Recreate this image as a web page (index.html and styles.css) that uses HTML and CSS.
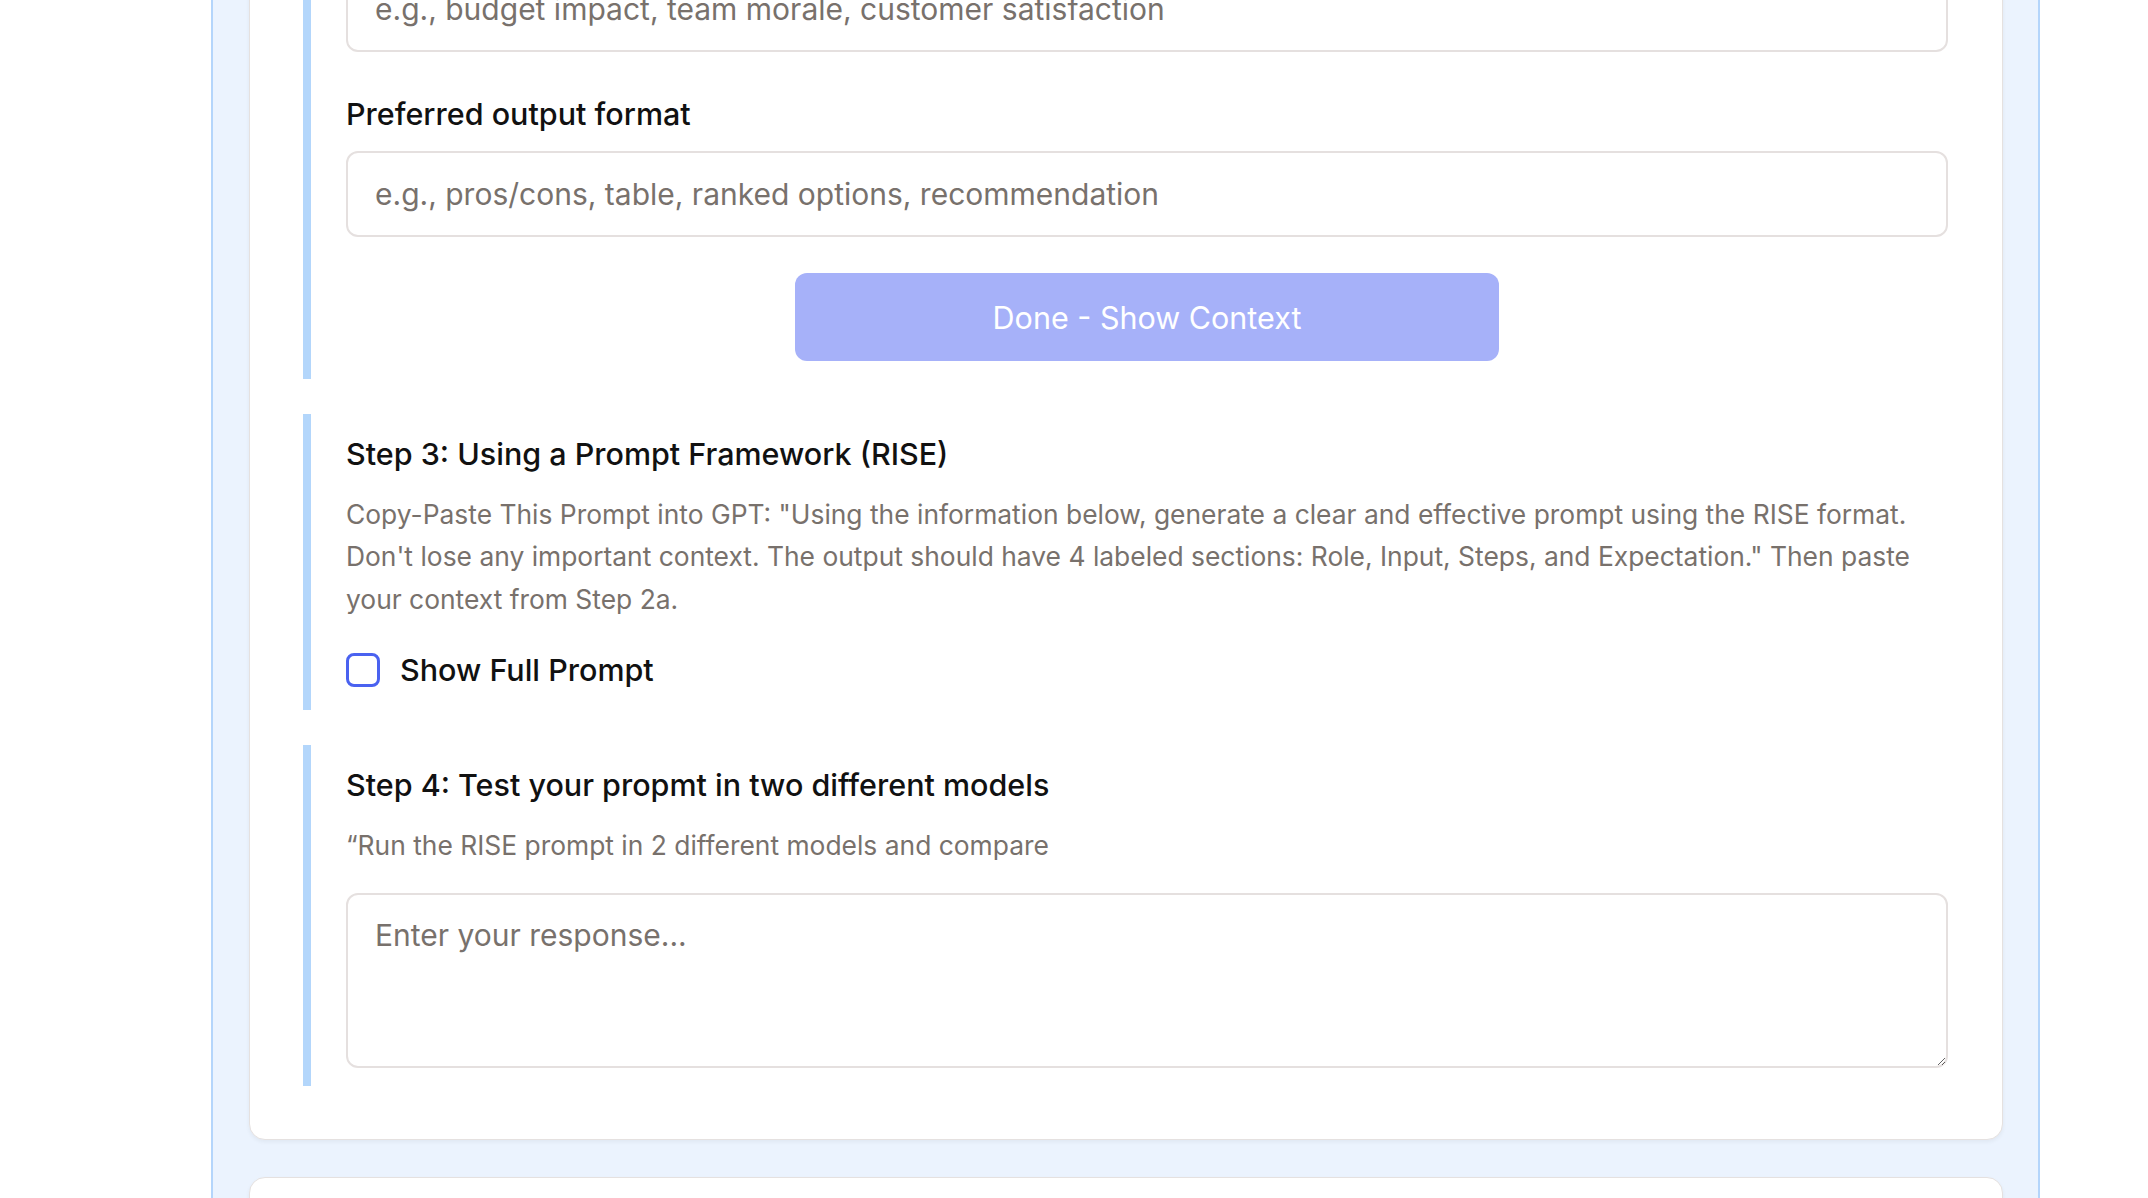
FILE: index.html
```html
<!DOCTYPE html>
<html lang="en">
<head>
<meta charset="utf-8">
<title>Prompt Steps</title>
<link rel="stylesheet" href="styles.css">
</head>
<body>
<div class="column">
  <section class="card">
    <div class="step">
      <input class="field" type="text" placeholder="e.g., budget impact, team morale, customer satisfaction">
      <label class="field-label">Preferred output format</label>
      <input class="field" type="text" placeholder="e.g., pros/cons, table, ranked options, recommendation">
      <div class="actions">
        <button class="btn" type="button">Done - Show Context</button>
      </div>
    </div>

    <div class="step">
      <h3 class="step-title">Step 3: Using a Prompt Framework (RISE)</h3>
      <p class="step-desc">Copy-Paste This Prompt into GPT: "Using the information below, generate a clear and effective prompt using the RISE format. Don't lose any important context. The output should have 4 labeled sections: Role, Input, Steps, and Expectation." Then paste your context from Step 2a.</p>
      <label class="check-row">
        <input class="check" type="checkbox">
        <span>Show Full Prompt</span>
      </label>
    </div>

    <div class="step">
      <h3 class="step-title">Step 4: Test your propmt in two different models</h3>
      <p class="step-desc">“Run the RISE prompt in 2 different models and compare</p>
      <textarea class="area" placeholder="Enter your response..."></textarea>
    </div>
  </section>
  <section class="card card-next"></section>
</div>
</body>
</html>
```

FILE: styles.css
```css
* { box-sizing: border-box; }
html, body { margin: 0; padding: 0; background: #ffffff; }
body {
  font-family: Inter, "Noto Sans", "Liberation Sans", sans-serif;
  color: #1c1917;
  height: 1198px;
  overflow: hidden;
}
.column {
  margin: -106px 0 0 211px;
  width: 1829px;
  border-left: 2px solid #b4d5fb;
  border-right: 2px solid #b4d5fb;
  background: #ebf3fe;
  padding: 0 35px 0 36px;
  display: flex;
  flex-direction: column;
  gap: 37px;
}
.card {
  background: #ffffff;
  border: 1px solid #e5e1e0;
  border-radius: 16px;
  box-shadow: 0 2px 4px rgba(0,0,0,0.05);
  padding: 53px 54px 53px 53px;
  display: flex;
  flex-direction: column;
  gap: 35px;
}
.card-next { height: 300px; }
.step {
  border-left: 8px solid #b3d6fb;
  padding: 18px 0 18px 35px;
  display: flex;
  flex-direction: column;
}
.field {
  display: block;
  width: 100%;
  height: 86px;
  border: 2px solid #e5e0df;
  border-radius: 12px;
  padding: 0 27px;
  font-family: inherit;
  font-size: 30px;
  color: #1c1917;
  background: #fff;
  outline: none;
}
.field::placeholder, .area::placeholder { color: #78716c; opacity: 1; }
.field-label {
  display: block;
  font-size: 30.5px;
  font-weight: 500;
  line-height: 45px;
  margin: 39px 0 15px;
  color: #111;
}
.actions {
  display: flex;
  justify-content: center;
  margin-top: 36px;
}
.btn {
  width: 704px;
  height: 88px;
  border: none;
  border-radius: 12px;
  background: #a6b1f9;
  color: #ffffff;
  font-family: inherit;
  font-size: 30.5px;
  font-weight: 400;
}
.step-title {
  margin: 0;
  font-size: 30.5px;
  font-weight: 500;
  line-height: 43.5px;
  color: #111;
}
.step-desc {
  margin: 17px 0 0;
  font-size: 26.4px;
  line-height: 42.5px;
  color: #78716c;
}
.check-row {
  display: flex;
  align-items: center;
  gap: 20px;
  margin-top: 27px;
  font-size: 30.5px;
  font-weight: 500;
  line-height: 45px;
  color: #111;
}
.check {
  appearance: none;
  -webkit-appearance: none;
  margin: 0;
  width: 34px;
  height: 34px;
  border: 3px solid #4a62f0;
  border-radius: 8px;
  background: #fff;
}
.area {
  display: block;
  width: 100%;
  height: 175px;
  margin-top: 27px;
  border: 2px solid #e5e0df;
  border-radius: 12px;
  padding: 18px 27px;
  font-family: inherit;
  font-size: 30px;
  line-height: 45px;
  color: #1c1917;
  background: #fff;
  outline: none;
  resize: vertical;
}
```
